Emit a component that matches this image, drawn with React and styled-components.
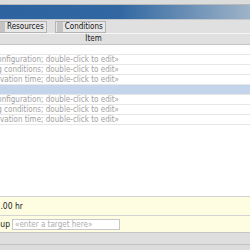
import React from "react";
import styled, { createGlobalStyle } from "styled-components";

const Global = createGlobalStyle`
  html, body { margin: 0; padding: 0; background: #ffffff; }
  body { font-family: "DejaVu Sans Condensed", "DejaVu Sans", sans-serif; font-stretch: condensed; }
`;

const Window = styled.div`
  width: 250px;
  height: 250px;
  display: flex;
  flex-direction: column;
  overflow: hidden;
  background: #ffffff;
  font-family: "DejaVu Sans Condensed", "DejaVu Sans", sans-serif;
  font-stretch: condensed;
  font-size: 8px;
`;

const TopStrip = styled.div`
  height: 4px;
  background: #dcdcdc;
  border-bottom: 1px solid #b9b9b9;
`;

const TitleBar = styled.div`
  height: 14px;
  background: linear-gradient(to right, #2d63a0 0%, #3168a2 48%, #9eb3c8 100%);
  border-bottom: 1px solid #c3c8cd;
`;

const Toolbar = styled.div`
  height: 14px;
  display: flex;
  align-items: flex-start;
  gap: 8px;
  padding-top: 1px;
  box-sizing: border-box;
  background: #e0e0e0;
  border-bottom: 1px solid #f6f6f6;
`;

const ToolButton = styled.div`
  height: 12px;
  box-sizing: border-box;
  display: flex;
  align-items: center;
  gap: 2px;
  padding: 0 2px 0 1px;
  margin-left: ${(p) => (p.$first ? "-3px" : "0")};
  background: #e7e7e7;
  border: 1px solid #b4b4b4;
  color: #111111;
  line-height: 10px;
  white-space: nowrap;
`;

const Grip = styled.span`
  width: 6px;
  height: 10px;
  flex: none;
  background-image: radial-gradient(circle, #9a9a9a 0.6px, transparent 0.8px);
  background-size: 2px 2px;
  background-position: 0 0;
`;

const HeaderRow = styled.div`
  height: 10px;
  display: flex;
  background: #e0e0e0;
  border-bottom: 1px solid #c4c4c4;
`;

const HeaderCell = styled.div`
  width: 187px;
  text-align: center;
  line-height: 10px;
  color: #222222;
`;

const List = styled.div`
  flex: 1;
  display: flex;
  flex-direction: column;
  background: #ffffff;
`;

const Row = styled.div`
  height: 9px;
  flex: none;
  display: flex;
  border-bottom: 1px solid #e6e6e6;
  background: ${(p) => (p.$selected ? "#c4d4ea" : "#ffffff")};
`;

const RowText = styled.div`
  width: 119px;
  display: flex;
  justify-content: flex-end;
  overflow: hidden;
  white-space: nowrap;
  color: #a2a2a2;
  line-height: 9px;
`;

const InfoPanel = styled.div`
  background: #fffde1;
  border-top: 1px solid #d2d2d2;
  border-bottom: 1px solid #c6c6c6;
`;

const InfoRow = styled.div`
  height: ${(p) => p.$h}px;
  display: flex;
  align-items: center;
  gap: 2px;
  border-bottom: ${(p) => (p.$divider ? "1px solid #d4d4d4" : "none")};
`;

const ClipLabel = styled.div`
  width: ${(p) => p.$w}px;
  flex: none;
  display: flex;
  justify-content: flex-end;
  overflow: hidden;
  white-space: nowrap;
  color: #222222;
  font-size: 8.5px;
`;

const TargetInput = styled.input`
  width: 108px;
  height: 11px;
  box-sizing: border-box;
  margin: 0;
  padding: 0 2px;
  border: 1px solid #c8c8c8;
  background: #ffffff;
  font-family: inherit;
  font-stretch: condensed;
  font-size: 8px;
  outline: none;
  &::placeholder { color: #adadad; }
`;

const StatusBar = styled.div`
  flex: none;
  height: 17px;
  box-sizing: border-box;
  background: #dedede;
  border-bottom: 5px solid #dcdcdc;
  box-shadow: inset 0 -6px 0 -5px #c2c2c2;
`;

const rows = [
  { text: "" },
  { text: "«enter configuration; double-click to edit»" },
  { text: "«enter observing conditions; double-click to edit»" },
  { text: "«enter observation time; double-click to edit»" },
  { text: "", selected: true },
  { text: "«enter configuration; double-click to edit»" },
  { text: "«enter observing conditions; double-click to edit»" },
  { text: "«enter observation time; double-click to edit»" },
];

export default function App() {
  return (
    <>
      <Global />
      <Window>
        <TopStrip />
        <TitleBar />
        <Toolbar>
          <ToolButton $first>
            <Grip />
            Resources
          </ToolButton>
          <ToolButton>
            <Grip />
            Conditions
          </ToolButton>
        </Toolbar>
        <HeaderRow>
          <HeaderCell>Item</HeaderCell>
        </HeaderRow>
        <List>
          {rows.map((r, i) => (
            <Row key={i} $selected={r.selected}>
              <RowText>{r.text}</RowText>
            </Row>
          ))}
        </List>
        <InfoPanel>
          <InfoRow $h={18} $divider>
            <ClipLabel $w={23}>Total 1.00 hr</ClipLabel>
          </InfoRow>
          <InfoRow $h={16}>
            <ClipLabel $w={10}>Group</ClipLabel>
            <TargetInput placeholder="«enter a target here»" />
          </InfoRow>
        </InfoPanel>
        <StatusBar />
      </Window>
    </>
  );
}
